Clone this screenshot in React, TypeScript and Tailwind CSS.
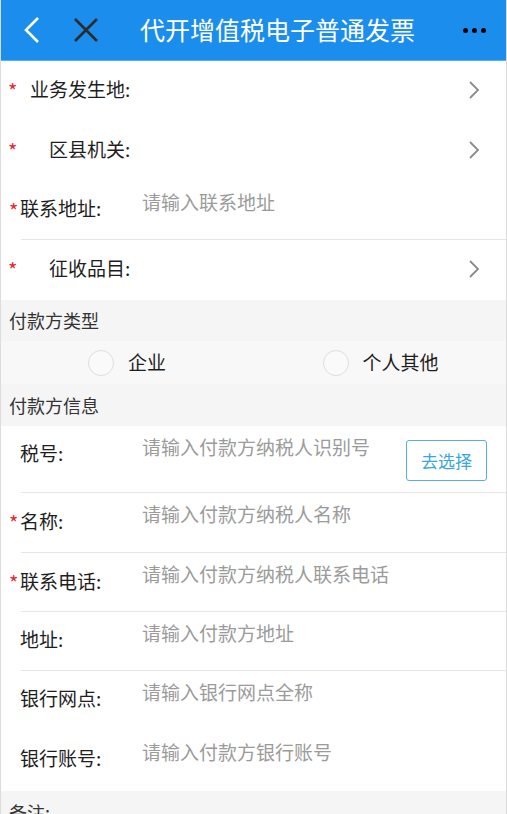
import React from "react";

const font = { fontFamily: '"Noto Sans CJK SC", "Noto Sans", sans-serif' };

const Star = ({ className = "" }: { className?: string }) => (
  <span className={`text-[#e8262d] text-[20px] leading-none ${className}`}>*</span>
);

const Chevron = () => (
  <svg width="12" height="20" viewBox="0 0 12 20" className="shrink-0">
    <polyline points="2,2 10,10 2,18" fill="none" stroke="#8a8a8a" strokeWidth="1.8" />
  </svg>
);

// select rows in the top block
const SelectRow = ({ label, indent }: { label: string; indent: string }) => (
  <div className="h-[60px] flex items-center pl-[7px] pr-[26px] pb-[3px]">
    <Star className="w-[13px] mt-[2px]" />
    <span className={`${indent} text-[19px] text-[#1e1e1e] flex-1`}>{label}:</span>
    <Chevron />
  </div>
);

const InputRow = ({
  label,
  placeholder,
  required,
  divider = true,
  height = "h-[60px]",
  children,
}: {
  label: string;
  placeholder: string;
  required?: boolean;
  divider?: boolean;
  height?: string;
  children?: React.ReactNode;
}) => (
  <div className={`${height} relative flex items-start`}>
    <div className="w-[141px] shrink-0 flex items-center pl-[8px] pt-[13px]">
      <span className="w-[11px] pt-[6px]">{required && <Star />}</span>
      <span className="text-[19px] text-[#1e1e1e]">{label}:</span>
    </div>
    <span className="pt-[7px] text-[19px] text-[#9b9b9b] flex-1">{placeholder}</span>
    {children}
    {divider && <div className="absolute bottom-0 left-[20px] right-0 h-px bg-[#e6e6e6]" />}
  </div>
);

export default function App() {
  return (
    <div style={font} className="w-[507px] h-[814px] overflow-hidden bg-white border-x border-[#dcdcdc]">
      {/* header */}
      <div className="h-[61px] bg-[#1b8ded] border-b border-[#5aaef2] flex items-center relative">
        <svg width="16" height="26" viewBox="0 0 16 26" className="ml-[23px]">
          <polyline points="14,1 2,13 14,25" fill="none" stroke="#fff" strokeWidth="2.6" />
        </svg>
        <svg width="26" height="26" viewBox="0 0 26 26" className="ml-[33px]">
          <path d="M2 2 L24 24 M24 2 L2 24" stroke="#2b2b2b" strokeWidth="2.6" />
        </svg>
        <span className="ml-[41px] text-[25px] text-white">代开增值税电子普通发票</span>
        <div className="absolute right-[20px] top-[28px] flex gap-[4px]">
          <span className="w-[5px] h-[5px] rounded-full bg-black" />
          <span className="w-[5px] h-[5px] rounded-full bg-black" />
          <span className="w-[5px] h-[5px] rounded-full bg-black" />
        </div>
      </div>

      <SelectRow label="业务发生地" indent="ml-[9px]" />
      <SelectRow label="区县机关" indent="ml-[28px]" />
      <div className="h-[59px] relative flex items-start">
        <div className="w-[141px] shrink-0 flex items-center pl-[8px] pt-[13px]">
          <Star className="w-[11px] pt-[6px]" />
          <span className="text-[19px] text-[#1e1e1e]">联系地址:</span>
        </div>
        <span className="pt-[7px] text-[19px] text-[#9b9b9b]">请输入联系地址</span>
        <div className="absolute bottom-0 left-[20px] right-0 h-px bg-[#e6e6e6]" />
      </div>
      <SelectRow label="征收品目" indent="ml-[28px]" />

      {/* payer type */}
      <div className="h-[41px] bg-[#f5f5f5] flex items-center pl-[8px] text-[18px] text-[#333]">付款方类型</div>
      <div className="h-[43px] bg-[#f8f8f8] grid grid-cols-2">
        <div className="flex items-center pl-[87px] gap-[14px]">
          <span className="w-[26px] h-[26px] rounded-full border border-[#dedede] bg-[#fafafa]" />
          <span className="text-[19px] text-[#1e1e1e]">企业</span>
        </div>
        <div className="flex items-center pl-[69px] gap-[14px]">
          <span className="w-[26px] h-[26px] rounded-full border border-[#dedede] bg-[#fafafa]" />
          <span className="text-[19px] text-[#1e1e1e]">个人其他</span>
        </div>
      </div>
      <div className="h-[42px] bg-[#f5f5f5] flex items-center pl-[8px] text-[18px] text-[#333]">付款方信息</div>

      <InputRow label="税号" placeholder="请输入付款方纳税人识别号" height="h-[67px]">
        <button className="mt-[14px] mr-[19px] w-[81px] h-[41px] rounded-[3px] border border-[#4fb2e2] text-[#3aa6de] text-[17px] bg-white">
          去选择
        </button>
      </InputRow>
      <InputRow label="名称" placeholder="请输入付款方纳税人名称" required />
      <InputRow label="联系电话" placeholder="请输入付款方纳税人联系电话" required height="h-[59px]" />
      <InputRow label="地址" placeholder="请输入付款方地址" height="h-[59px]" />
      <InputRow label="银行网点" placeholder="请输入银行网点全称" divider={false} />
      <InputRow label="银行账号" placeholder="请输入付款方银行账号" divider={false} />

      <div className="h-[42px] bg-[#f5f5f5] flex items-center pl-[8px] text-[18px] text-[#333]">备注:</div>
    </div>
  );
}
